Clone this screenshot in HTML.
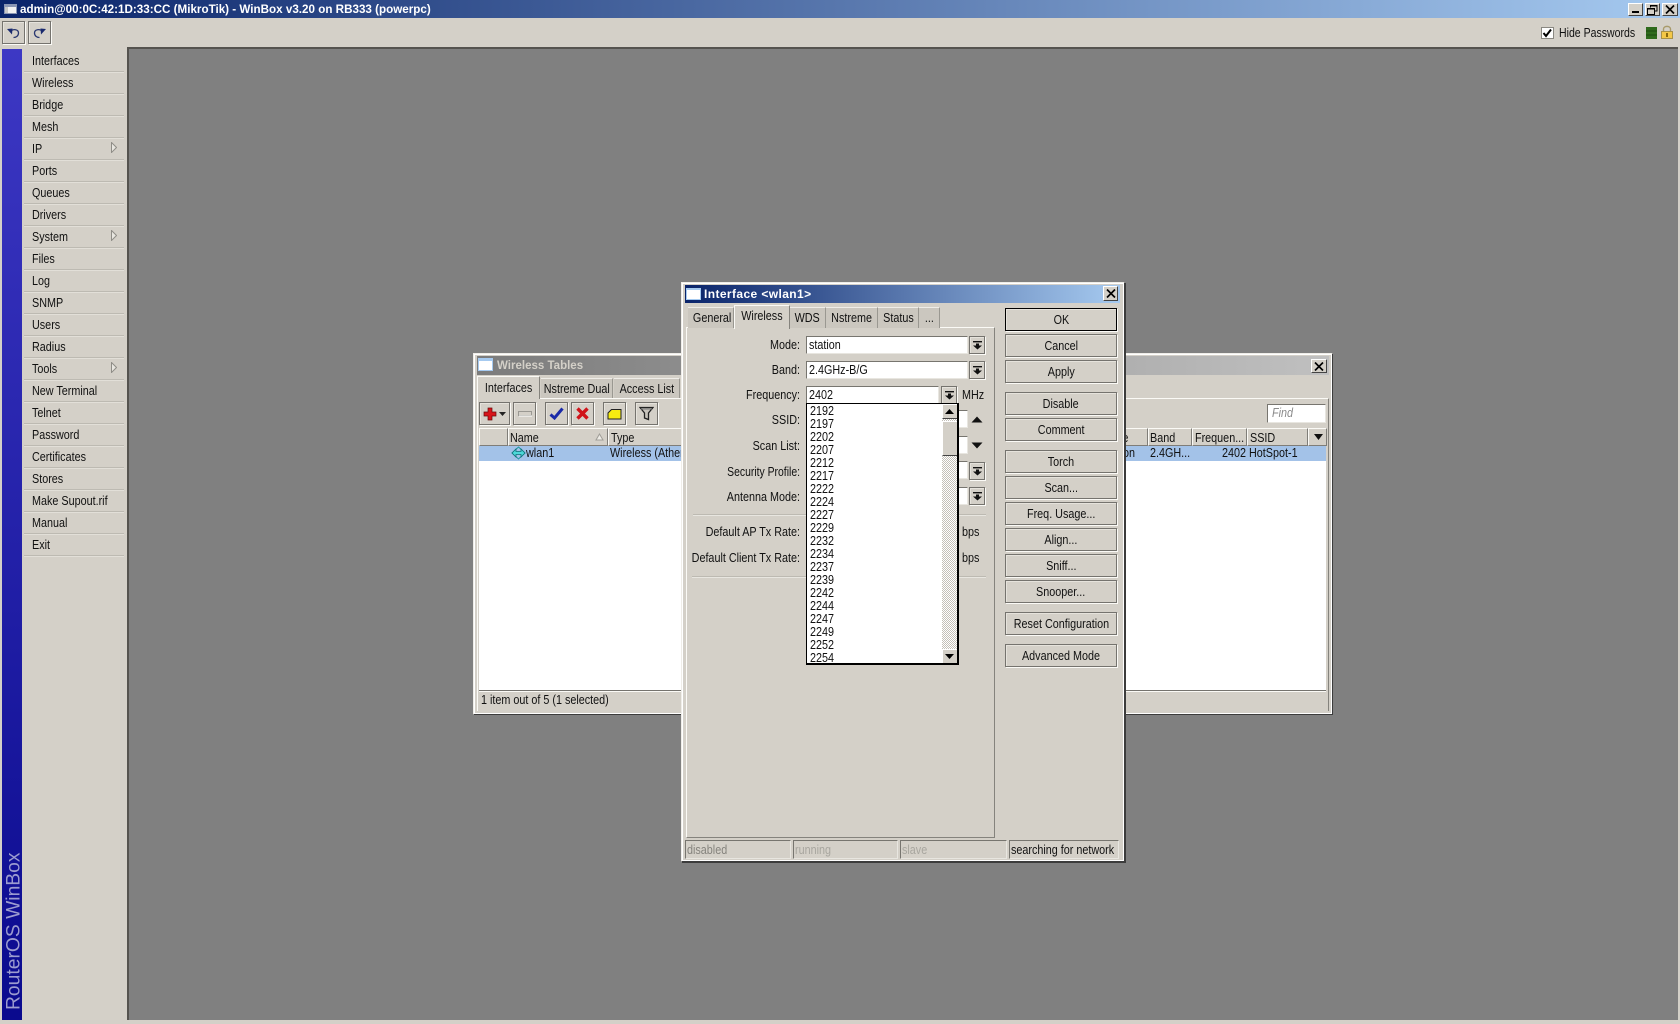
<!DOCTYPE html>
<html lang="en"><head><meta charset="utf-8"><title>WinBox</title>
<style>
html,body{margin:0;padding:0;width:1680px;height:1024px;overflow:hidden;background:#d4d0c8}
body{position:relative;font:13px/16px "Liberation Sans",sans-serif;color:#111}
.a{position:absolute;box-sizing:border-box}
.t{position:absolute;white-space:nowrap;height:16px;line-height:16px;transform:scaleX(.83);transform-origin:0 50%}
.r{position:absolute;white-space:nowrap;height:16px;line-height:16px;text-align:right;transform:scaleX(.83);transform-origin:100% 50%}
.b{position:absolute;box-sizing:border-box;background:#d4d0c8;border:1px solid #75736e;box-shadow:1px 1px 0 #fbfaf6,inset 1px 1px 0 #e6e3dc;display:flex;align-items:center;justify-content:center;overflow:hidden}
.b span{display:inline-block;transform:scaleX(.83);white-space:nowrap}
.f{position:absolute;box-sizing:border-box;background:#fff;border:1px solid #77756f;border-right-color:#e8e6e0;border-bottom-color:#e8e6e0}
.m{box-sizing:border-box;height:22px;line-height:21px;padding-left:8px;margin-left:2px;width:100px;border-bottom:1px solid #bdbab2;box-shadow:0 1px 0 #e2dfd8;position:relative}
.m span,.i span{display:inline-block;transform:scaleX(.83);transform-origin:0 50%;white-space:nowrap}
.i{height:13px;line-height:13px;padding-left:3px}
.tab{position:absolute;box-sizing:border-box;background:#cbc7bf;border-top:1px solid #efede8;border-right:1px solid #9a9891;display:flex;align-items:center;justify-content:center}
.tab span{display:inline-block;transform:scaleX(.83);white-space:nowrap}
.tab.on{background:#d4d0c8;border:1px solid #fbfaf6;border-right-color:#85837d;border-bottom:0;z-index:2}
.h{position:absolute;box-sizing:border-box;top:428px;height:18px;background:#d4d0c8;border-top:1px solid #fbfaf6;border-left:1px solid #fbfaf6;border-right:1px solid #7f7d78;border-bottom:1px solid #7f7d78}
.win{position:absolute;box-sizing:border-box;background:#d4d0c8;border:1px solid;border-color:#efede8 #3c3c3c #3c3c3c #efede8;box-shadow:inset 1px 1px 0 #fff,inset -1px -1px 0 #fff,inset 3px 3px 0 #d4d0c8}
svg{display:block}
</style></head><body>
<svg width="0" height="0" style="position:absolute"><defs>
<symbol id="dd" viewBox="0 0 9 9"><rect x="0" y="0" width="9" height="1.4" fill="#111"/><path d="M3 2.5H6V4.500H9L4.500 8.500L0 4.500H3Z" fill="#111"/></symbol>
</defs></svg>

<!-- title bar -->
<div class="a" style="left:0;top:0;width:1680px;height:18px;background:linear-gradient(90deg,#0a246a,#a6caf0)"></div>
<svg class="a" style="left:4px;top:4px" width="13" height="10"><rect x="0" y="0" width="13" height="10" fill="#8a96b4"/><rect x="1" y="3" width="11" height="6" fill="#f2f2f2"/><rect x="1" y="3" width="3" height="6" fill="#c8c8c8"/></svg>
<div class="t" id="mt" style="left:20px;top:1px;font-size:12px;font-weight:bold;color:#fff;transform:scaleX(.97);letter-spacing:0">admin@00:0C:42:1D:33:CC (MikroTik) - WinBox v3.20 on RB333 (powerpc)</div>
<div class="b" style="left:1628px;top:3px;width:15px;height:13px;align-items:flex-end;border-color:#fff #444 #444 #fff;box-shadow:none"><div style="width:7px;height:2px;background:#000;margin-bottom:2px"></div></div>
<div class="b" style="left:1645px;top:3px;width:15px;height:13px;border-color:#fff #444 #444 #fff;box-shadow:none"><svg width="11" height="10"><path d="M3.500 2.500V.5H10V6H8M.5 3.500H7.500V9.500H.5Z" fill="none" stroke="#000"/><path d="M3 1H10M0 4H8" stroke="#000"/></svg></div>
<div class="b" style="left:1662px;top:3px;width:16px;height:13px;border-color:#fff #444 #444 #fff;box-shadow:none"><svg width="10" height="9"><path d="M1 .5L9 8.500M9 .5L1 8.500" stroke="#000" stroke-width="1.700"/></svg></div>

<!-- toolbar -->
<div class="b" style="left:2px;top:21px;width:23px;height:23px"><svg width="13" height="12" viewBox="0 0 13 12"><path d="M4 4C6 2 11.500 2 11.500 6C11.500 9 9 10.500 6.500 10.500" fill="none" stroke="#2a3870" stroke-width="1.300"/><path d="M0 2L5.500 1.500L5 7.500Z" fill="#1a2a6e"/></svg></div>
<div class="b" style="left:28px;top:21px;width:23px;height:23px"><svg width="13" height="12" viewBox="0 0 13 12"><path d="M9 4C7 2 1.500 2 1.500 6C1.500 9 4 10.500 6.500 10.500" fill="none" stroke="#2a3870" stroke-width="1.300"/><path d="M13 2L7.500 1.500L8 7.500Z" fill="#1a2a6e"/></svg></div>
<div class="a" style="left:1541px;top:27px;width:13px;height:12px;background:#fff;border:1px solid #8a8882"></div>
<svg class="a" style="left:1542px;top:28px" width="11" height="10"><path d="M1.500 5L4 8L9 1.500" fill="none" stroke="#000" stroke-width="2"/></svg>
<div class="t" style="left:1559px;top:25px;transform:scaleX(.81)">Hide Passwords</div>
<svg class="a" style="left:1646px;top:27px" width="11" height="12"><rect width="11" height="12" fill="#2f6a1c"/><path d="M0 4H11M0 8H11" stroke="#1d4a10"/></svg>
<svg class="a" style="left:1660px;top:25px" width="14" height="14"><path d="M3.500 7V4C3.500 .5 10.500 .5 10.500 4V7" fill="none" stroke="#a89a6a" stroke-width="1.400"/><rect x="1.500" y="6.500" width="11" height="7" fill="#f4c848" stroke="#a8924a"/><rect x="6" y="8" width="2" height="4" fill="#8a6a10"/></svg>

<!-- sidebar -->
<div class="a" style="left:2px;top:49px;width:20px;height:971px;background:linear-gradient(180deg,#3d38c4,#0a0a8e)"></div>
<svg class="a" style="left:2px;top:840px" width="20" height="180"><text transform="translate(17.500,170) rotate(-90)" font-family="Liberation Sans,sans-serif" font-size="19.300" fill="#9c9cd0">RouterOS WinBox</text></svg>
<div class="a" style="left:22px;top:50px;width:104px">
<div class="m"><span>Interfaces</span></div>
<div class="m"><span>Wireless</span></div>
<div class="m"><span>Bridge</span></div>
<div class="m"><span>Mesh</span></div>
<div class="m"><span>IP</span></div>
<div class="m"><span>Ports</span></div>
<div class="m"><span>Queues</span></div>
<div class="m"><span>Drivers</span></div>
<div class="m"><span>System</span></div>
<div class="m"><span>Files</span></div>
<div class="m"><span>Log</span></div>
<div class="m"><span>SNMP</span></div>
<div class="m"><span>Users</span></div>
<div class="m"><span>Radius</span></div>
<div class="m"><span>Tools</span></div>
<div class="m"><span>New Terminal</span></div>
<div class="m"><span>Telnet</span></div>
<div class="m"><span>Password</span></div>
<div class="m"><span>Certificates</span></div>
<div class="m"><span>Stores</span></div>
<div class="m"><span>Make Supout.rif</span></div>
<div class="m"><span>Manual</span></div>
<div class="m"><span>Exit</span></div>
</div>
<svg class="a" style="left:111px;top:142px" width="6" height="11"><path d="M.5 .5L5.500 5.500L.5 10.500Z" fill="#e8e6e0" stroke="#8f8d87"/></svg>
<svg class="a" style="left:111px;top:230px" width="6" height="11"><path d="M.5 .5L5.500 5.500L.5 10.500Z" fill="#e8e6e0" stroke="#8f8d87"/></svg>
<svg class="a" style="left:111px;top:362px" width="6" height="11"><path d="M.5 .5L5.500 5.500L.5 10.500Z" fill="#e8e6e0" stroke="#8f8d87"/></svg>

<!-- workspace -->
<div class="a" style="left:127px;top:47px;width:1551px;height:973px;background:#808080;border-top:2px solid #55534f;border-left:2px solid #55534f"></div>

<!-- Wireless Tables window -->
<div class="win" style="left:473px;top:353px;width:860px;height:362px"></div>
<div class="a" style="left:477px;top:356px;width:852px;height:19px;background:linear-gradient(90deg,#7c7c7c,#c0c0c0)"></div>
<svg class="a" style="left:478px;top:358px" width="15" height="13"><rect width="15" height="13" fill="#a6caf0"/><rect x="1" y="3" width="13" height="9" fill="#fff"/></svg>
<div class="t" style="left:497px;top:357px;font-size:12px;font-weight:bold;color:#d4d0c8;transform:scaleX(.96)">Wireless Tables</div>
<div class="b" style="left:1311px;top:359px;width:16px;height:14px;border-color:#fff #444 #444 #fff;box-shadow:none"><svg width="10" height="9"><path d="M1 .5L9 8.500M9 .5L1 8.500" stroke="#000" stroke-width="1.700"/></svg></div>
<div class="a" style="left:477px;top:398px;width:852px;height:313px;border-top:1px solid #fbfaf6;border-left:1px solid #fbfaf6;border-right:1px solid #85837d"></div>
<div class="tab" style="left:541px;top:378px;width:72px;height:20px"><span>Nstreme Dual</span></div>
<div class="tab" style="left:614px;top:378px;width:66px;height:20px"><span>Access List</span></div>
<div class="tab on" style="left:477px;top:376px;width:63px;height:23px"><span>Interfaces</span></div>

<div class="b" style="left:479px;top:402px;width:31px;height:23px"><svg width="26" height="14" viewBox="0 0 26 14"><path d="M6 1H10V5H14V9H10V13H6V9H2V5H6Z" fill="#d8141a" stroke="#6a0a0a" stroke-width=".7"/><path d="M17 5H24L20.500 9Z" fill="#222"/></svg></div>
<div class="b" style="left:513px;top:402px;width:23px;height:23px"><svg width="14" height="6"><rect x=".5" y=".5" width="13" height="4" fill="#d4d0c8" stroke="#9a9892"/><rect x="1" y="4.500" width="13" height="1" fill="#fff"/></svg></div>
<div class="b" style="left:545px;top:402px;width:23px;height:23px"><svg width="15" height="13"><path d="M1.500 7.500L5.500 11L13.500 1.500" fill="none" stroke="#1a2aa8" stroke-width="3"/></svg></div>
<div class="b" style="left:571px;top:402px;width:23px;height:23px"><svg width="13" height="13"><path d="M1.500 1.500L11.500 11.500M11.500 1.500L1.500 11.500" stroke="#d0141a" stroke-width="3.400"/></svg></div>
<div class="b" style="left:603px;top:402px;width:23px;height:23px"><svg width="15" height="12"><path d="M4.500 1.500H14V11H1V5Z" fill="#f6ec10" stroke="#222"/></svg></div>
<div class="b" style="left:635px;top:402px;width:23px;height:23px"><svg width="15" height="15"><path d="M1 1.500H14L9.500 7V13.500L5.500 12V7Z" fill="#c8c4bc" stroke="#222" stroke-width="1.300"/><path d="M2 3H13" stroke="#777"/></svg></div>

<div class="a" style="left:479px;top:428px;width:847px;height:262px;background:#fff"></div>
<div class="h" style="left:479px;width:29px"></div>
<div class="h" style="left:508px;width:100px"></div>
<div class="h" style="left:608px;width:500px"></div>
<div class="h" style="left:1108px;width:40px"></div>
<div class="h" style="left:1148px;width:44px"></div>
<div class="h" style="left:1192px;width:55px"></div>
<div class="h" style="left:1247px;width:61px"></div>
<div class="h" style="left:1308px;width:19px"></div>
<svg class="a" style="left:1313px;top:433px" width="11" height="8"><path d="M1 1H10L5.500 7Z" fill="#111"/></svg>
<div class="t" style="left:510px;top:430px">Name</div>
<svg class="a" style="left:595px;top:433px" width="9" height="8"><path d="M4.500 1L8 7H1Z" fill="#eeece6" stroke="#a09e98"/></svg>
<div class="t" style="left:611px;top:430px">Type</div>
<div class="t" style="left:1120px;top:430px">le</div>
<div class="t" style="left:1150px;top:430px">Band</div>
<div class="t" style="left:1195px;top:430px">Frequen...</div>
<div class="t" style="left:1250px;top:430px">SSID</div>
<div class="a" style="left:479px;top:446px;width:847px;height:15px;background:#a3c2e8"></div>
<svg class="a" style="left:511px;top:446px" width="15" height="14" viewBox="0 0 15 14"><path d="M7.500 1L14 7L7.500 13L1 7Z" fill="none" stroke="#1f9aa0"/><path d="M1 7L5 3V5.500H10V3L14 7L10 11V8.500H5V11Z" fill="#4cd8d8" stroke="#0f7078" stroke-width=".8"/></svg>
<div class="t" style="left:526px;top:445px">wlan1</div>
<div class="t" style="left:610px;top:445px">Wireless (Atheros)</div>
<div class="t" style="left:1123px;top:445px">on</div>
<div class="t" style="left:1150px;top:445px">2.4GH...</div>
<div class="r" style="left:1196px;top:445px;width:50px">2402</div>
<div class="t" style="left:1249px;top:445px">HotSpot-1</div>
<div class="f" style="left:1267px;top:404px;width:59px;height:19px"></div>
<div class="t" style="left:1272px;top:405px;font-style:italic;color:#8a8a8a">Find</div>
<div class="a" style="left:479px;top:690px;width:847px;height:21px;background:#d4d0c8;border-top:1px solid #75736e;box-shadow:inset 0 1px 0 #fbfaf6"></div>
<div class="t" style="left:481px;top:692px">1 item out of 5 (1 selected)</div>

<!-- Interface window -->
<div class="win" style="left:681px;top:282px;width:444px;height:580px;box-shadow:inset 1px 1px 0 #fff,inset -1px -1px 0 #fff,1px 1px 0 #3c3c3c"></div>
<div class="a" style="left:685px;top:285px;width:435px;height:18px;background:linear-gradient(90deg,#0a246a,#a6caf0)"></div>
<svg class="a" style="left:686px;top:288px" width="15" height="12"><rect width="15" height="12" fill="#a6caf0"/><rect x="1" y="2" width="13" height="9" fill="#fff"/></svg>
<div class="t" style="left:704px;top:286px;font-size:12px;font-weight:bold;color:#fff;letter-spacing:.4px;transform:none">Interface &lt;wlan1&gt;</div>
<div class="b" style="left:1103px;top:286px;width:15px;height:15px;border-color:#fff #444 #444 #fff;box-shadow:none"><svg width="10" height="9"><path d="M1 .5L9 8.500M9 .5L1 8.500" stroke="#000" stroke-width="1.700"/></svg></div>

<div class="a" style="left:686px;top:327px;width:309px;height:511px;border:1px solid;border-color:#fbfaf6 #85837d #85837d #fbfaf6"></div>
<div class="tab" style="left:688px;top:307px;width:46px;height:21px;padding-left:3px"><span>General</span></div>
<div class="tab" style="left:790px;top:307px;width:36px;height:21px"><span>WDS</span></div>
<div class="tab" style="left:826px;top:307px;width:52px;height:21px"><span>Nstreme</span></div>
<div class="tab" style="left:878px;top:307px;width:41px;height:21px"><span>Status</span></div>
<div class="tab" style="left:919px;top:307px;width:21px;height:21px"><span>...</span></div>
<div class="tab on" style="left:734px;top:305px;width:56px;height:24px;padding-bottom:3px"><span>Wireless</span></div>

<div class="r" style="left:640px;top:337px;width:160px">Mode:</div>
<div class="f" style="left:806px;top:336px;width:162px;height:18px"></div>
<div class="t" style="left:809px;top:337px">station</div>
<div class="b" style="left:969px;top:336px;width:16px;height:18px"><svg width="9" height="9"><use href="#dd"/></svg></div>

<div class="r" style="left:640px;top:362px;width:160px">Band:</div>
<div class="f" style="left:806px;top:361px;width:162px;height:18px"></div>
<div class="t" style="left:809px;top:362px">2.4GHz-B/G</div>
<div class="b" style="left:969px;top:361px;width:16px;height:18px"><svg width="9" height="9"><use href="#dd"/></svg></div>

<div class="r" style="left:640px;top:387px;width:160px">Frequency:</div>
<div class="f" style="left:806px;top:386px;width:133px;height:18px"></div>
<div class="t" style="left:809px;top:387px">2402</div>
<div class="b" style="left:941px;top:386px;width:16px;height:18px"><svg width="9" height="9"><use href="#dd"/></svg></div>
<div class="t" style="left:962px;top:387px">MHz</div>

<div class="r" style="left:640px;top:412px;width:160px">SSID:</div>
<div class="f" style="left:900px;top:410px;width:68px;height:18px"></div>
<svg class="a" style="left:971px;top:416px" width="12" height="7"><path d="M6 .5L11.500 6.500H.5Z" fill="#111"/></svg>
<div class="r" style="left:640px;top:438px;width:160px">Scan List:</div>
<div class="f" style="left:900px;top:436px;width:68px;height:18px"></div>
<svg class="a" style="left:971px;top:442px" width="12" height="7"><path d="M.5 .5H11.500L6 6.500Z" fill="#111"/></svg>
<div class="r" style="left:640px;top:464px;width:160px;transform:scaleX(.8)">Security Profile:</div>
<div class="f" style="left:900px;top:461px;width:68px;height:18px"></div>
<div class="b" style="left:969px;top:462px;width:16px;height:18px"><svg width="9" height="9"><use href="#dd"/></svg></div>
<div class="r" style="left:640px;top:489px;width:160px">Antenna Mode:</div>
<div class="f" style="left:900px;top:487px;width:68px;height:18px"></div>
<div class="b" style="left:969px;top:487px;width:16px;height:18px"><svg width="9" height="9"><use href="#dd"/></svg></div>
<div class="a" style="left:693px;top:514px;width:293px;height:2px;border-top:1px solid #bdbab2;border-bottom:1px solid #e8e6e0"></div>
<div class="r" style="left:640px;top:524px;width:160px">Default AP Tx Rate:</div>
<div class="t" style="left:962px;top:524px">bps</div>
<div class="r" style="left:640px;top:550px;width:160px">Default Client Tx Rate:</div>
<div class="t" style="left:962px;top:550px">bps</div>
<div class="a" style="left:692px;top:576px;width:294px;height:2px;border-top:1px solid #bdbab2;border-bottom:1px solid #e8e6e0"></div>

<!-- dropdown -->
<div class="a" style="left:806px;top:403px;width:153px;height:262px;background:#fff;border:1px solid #000;border-right-width:2px;border-bottom-width:2px;overflow:hidden">
<div style="position:absolute;left:0;top:0;width:136px">
<div class="i"><span>2192</span></div><div class="i"><span>2197</span></div><div class="i"><span>2202</span></div><div class="i"><span>2207</span></div><div class="i"><span>2212</span></div><div class="i"><span>2217</span></div><div class="i"><span>2222</span></div><div class="i"><span>2224</span></div><div class="i"><span>2227</span></div><div class="i"><span>2229</span></div><div class="i"><span>2232</span></div><div class="i"><span>2234</span></div><div class="i"><span>2237</span></div><div class="i"><span>2239</span></div><div class="i"><span>2242</span></div><div class="i"><span>2244</span></div><div class="i"><span>2247</span></div><div class="i"><span>2249</span></div><div class="i"><span>2252</span></div><div class="i"><span>2254</span></div>
</div>
<div class="a" style="left:135px;top:0;width:16px;height:260px;background:repeating-conic-gradient(#fff 0 25%,#c4c0b8 0 50%) 0 0/2px 2px"></div>
<div class="a" style="left:135px;top:0;width:16px;height:15px;background:#d4d0c8;border:1px solid;border-color:#fff #444 #444 #fff"></div>
<svg class="a" style="left:138px;top:5px" width="9" height="5"><path d="M4.500 0L9 5H0Z" fill="#000"/></svg>
<div class="a" style="left:135px;top:17px;width:16px;height:35px;background:#d4d0c8;border:1px solid;border-color:#fff #444 #444 #fff"></div>
<div class="a" style="left:135px;top:245px;width:16px;height:15px;background:#d4d0c8;border:1px solid;border-color:#fff #444 #444 #fff"></div>
<svg class="a" style="left:138px;top:250px" width="9" height="5"><path d="M0 0H9L4.500 5Z" fill="#000"/></svg>
</div>

<!-- right buttons -->
<div class="b" style="left:1005px;top:308px;width:112px;height:23px;border-color:#000"><span>OK</span></div>
<div class="b" style="left:1005px;top:334px;width:112px;height:23px"><span>Cancel</span></div>
<div class="b" style="left:1005px;top:360px;width:112px;height:23px"><span>Apply</span></div>
<div class="b" style="left:1005px;top:392px;width:112px;height:23px"><span>Disable</span></div>
<div class="b" style="left:1005px;top:418px;width:112px;height:23px"><span>Comment</span></div>
<div class="b" style="left:1005px;top:450px;width:112px;height:23px"><span>Torch</span></div>
<div class="b" style="left:1005px;top:476px;width:112px;height:23px"><span>Scan...</span></div>
<div class="b" style="left:1005px;top:502px;width:112px;height:23px"><span>Freq. Usage...</span></div>
<div class="b" style="left:1005px;top:528px;width:112px;height:23px"><span>Align...</span></div>
<div class="b" style="left:1005px;top:554px;width:112px;height:23px"><span>Sniff...</span></div>
<div class="b" style="left:1005px;top:580px;width:112px;height:23px"><span>Snooper...</span></div>
<div class="b" style="left:1005px;top:612px;width:112px;height:23px"><span>Reset Configuration</span></div>
<div class="b" style="left:1005px;top:644px;width:112px;height:23px"><span>Advanced Mode</span></div>

<!-- status -->
<div class="f" style="left:685px;top:840px;width:106px;height:19px;background:#d4d0c8"></div>
<div class="t" style="left:687px;top:842px;color:#85837d">disabled</div>
<div class="f" style="left:793px;top:840px;width:105px;height:19px;background:#d4d0c8"></div>
<div class="t" style="left:795px;top:842px;color:#a8a69f">running</div>
<div class="f" style="left:900px;top:840px;width:107px;height:19px;background:#d4d0c8"></div>
<div class="t" style="left:902px;top:842px;color:#a8a69f">slave</div>
<div class="f" style="left:1009px;top:840px;width:110px;height:19px;background:#d4d0c8"></div>
<div class="t" style="left:1011px;top:842px">searching for network</div>
</body></html>
